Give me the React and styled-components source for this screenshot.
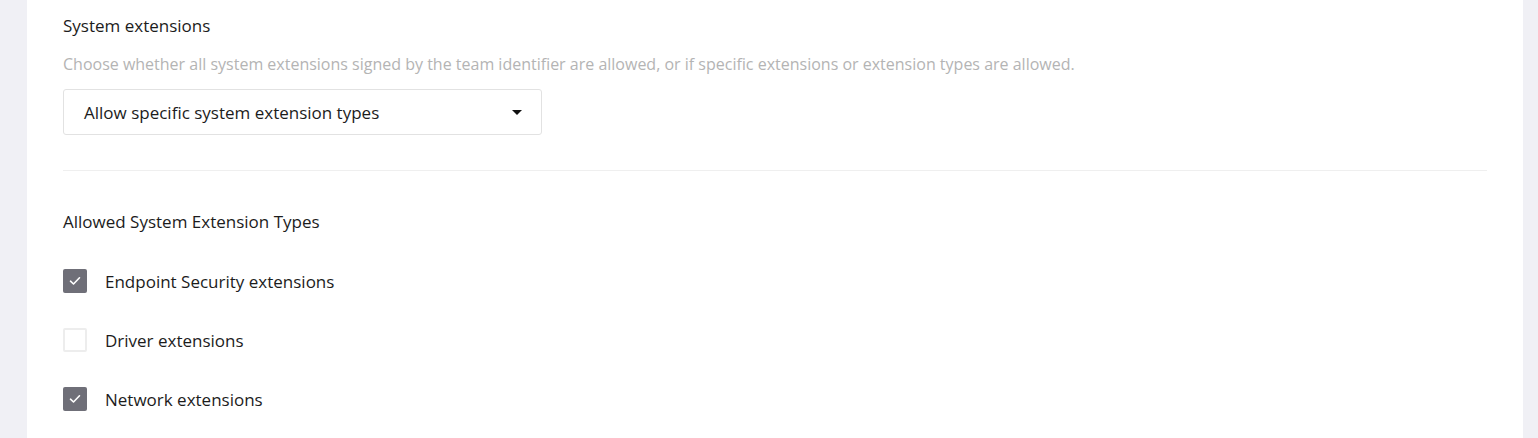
import React, { useState } from 'react';
import styled, { createGlobalStyle } from 'styled-components';

const GlobalStyle = createGlobalStyle`
  html, body {
    margin: 0;
    padding: 0;
    background: #f0f0f5;
    font-family: 'Open Sans', 'Noto Sans', sans-serif;
  }
`;

const Page = styled.div`
  display: flex;
  height: 438px;
  padding: 0 15px 0 27px;
  background: #f0f0f5;
  overflow: hidden;
`;

const Card = styled.div`
  flex: 1;
  background: #fff;
  padding: 15px 36px 0 36px;
  display: flex;
  flex-direction: column;
`;

const Title = styled.div`
  font-size: 17px;
  color: #1c1c1c;
  line-height: 22px;
`;

const Description = styled.div`
  margin-top: 16px;
  font-size: 16px;
  color: #b4b4b4;
  line-height: 22px;
`;

const Select = styled.div`
  margin-top: 14px;
  width: 479px;
  height: 46px;
  box-sizing: border-box;
  border: 1px solid #e2e2e2;
  border-radius: 3px;
  display: flex;
  align-items: center;
  justify-content: space-between;
  padding: 0 19px 0 20px;
  font-size: 17px;
  color: #1c1c1c;
  cursor: pointer;
`;

const Caret = styled.span`
  width: 0;
  height: 0;
  border-left: 5px solid transparent;
  border-right: 5px solid transparent;
  border-top: 5px solid #111;
`;

const Divider = styled.div`
  margin-top: 35px;
  height: 1px;
  background: #efefef;
`;

const SubTitle = styled.div`
  margin-top: 40px;
  font-size: 17px;
  color: #1c1c1c;
  line-height: 22px;
`;

const List = styled.div`
  margin-top: 36px;
  display: flex;
  flex-direction: column;
  gap: 35px;
`;

const Row = styled.label`
  display: flex;
  align-items: center;
  gap: 18px;
  height: 24px;
  font-size: 17px;
  color: #1c1c1c;
  cursor: pointer;
`;

const Box = styled.span`
  width: 24px;
  height: 24px;
  flex-shrink: 0;
  box-sizing: border-box;
  border-radius: 2px;
  display: flex;
  align-items: center;
  justify-content: center;
  background: ${(p) => (p.checked ? '#6f6f78' : '#fff')};
  border: ${(p) => (p.checked ? 'none' : '2px solid #ededed')};
`;

const Check = () => (
  <svg width="12" height="10" viewBox="0 0 12 10" fill="none">
    <path d="M1.5 5.2 L4.5 8 L10.5 1.8" stroke="#fff" strokeWidth="1.6" strokeLinecap="round" strokeLinejoin="round" />
  </svg>
);

const items = [
  { label: 'Endpoint Security extensions', checked: true },
  { label: 'Driver extensions', checked: false },
  { label: 'Network extensions', checked: true },
];

export default function App() {
  const [state, setState] = useState(items);
  const toggle = (i) =>
    setState((s) => s.map((it, j) => (j === i ? { ...it, checked: !it.checked } : it)));

  return (
    <>
      <GlobalStyle />
      <Page>
        <Card>
          <Title>System extensions</Title>
          <Description>
            Choose whether all system extensions signed by the team identifier are allowed, or if specific extensions or extension types are allowed.
          </Description>
          <Select>
            <span>Allow specific system extension types</span>
            <Caret />
          </Select>
          <Divider />
          <SubTitle>Allowed System Extension Types</SubTitle>
          <List>
            {state.map((it, i) => (
              <Row key={it.label} onClick={() => toggle(i)}>
                <Box checked={it.checked}>{it.checked && <Check />}</Box>
                {it.label}
              </Row>
            ))}
          </List>
        </Card>
      </Page>
    </>
  );
}
